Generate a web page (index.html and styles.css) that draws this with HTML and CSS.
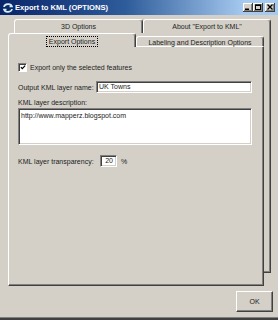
FILE: index.html
```html
<!DOCTYPE html>
<html lang="en">
<head>
  <meta charset="UTF-8">
  <title>Export to KML (OPTIONS)</title>
  <link rel="stylesheet" href="styles.css">
</head>
<body>
  <div class="window">
    <div class="titlebar">
      <svg class="app-icon" width="12" height="12" viewBox="0 0 12 12">
        <path d="M2 5 C2.5 1.5 9 1 10 4.5 L7.5 4.5 M10 7 C9.5 10.5 3 11 2 7.5 L4.5 7.5" stroke="#d6eeee" stroke-width="1.6" fill="none"/>
      </svg>
      <span class="title">Export to KML (OPTIONS)</span>
      <div class="caption-btns">
        <span class="cbtn"><svg width="10" height="9" viewBox="0 0 10 9"><rect x="2" y="5.5" width="4" height="1.5" fill="#000"/></svg></span>
        <span class="cbtn"><svg width="10" height="9" viewBox="0 0 10 9"><rect x="2.5" y="2" width="5" height="4.5" fill="none" stroke="#000" stroke-width="1"/><rect x="2" y="1.5" width="6" height="1.5" fill="#000"/></svg></span>
        <span class="cbtn close"><svg width="10" height="9" viewBox="0 0 10 9"><path d="M2.5 1.5 L7.5 6.5 M7.5 1.5 L2.5 6.5" stroke="#000" stroke-width="1.3"/></svg></span>
      </div>
    </div>

    <div class="tabstrip">
      <div class="tab-row back-row">
        <div class="tab t-3d">3D Options</div>
        <div class="tab t-about">About "Export to KML"</div>
      </div>
      <div class="stack">
        <div class="front">
          <div class="tab-row front-row">
            <div class="tab selected"><span class="focus">Export Options</span></div>
            <div class="tab t-label">Labeling and Description Options</div>
          </div>
          <div class="panel">
            <div class="check-row">
              <span class="checkbox">
                <svg width="7" height="7" viewBox="0 0 7 7"><path d="M1 3 L2.7 4.8 L6 1.3" stroke="#000" stroke-width="1.4" fill="none"/></svg>
              </span>
              <span>Export only the selected features</span>
            </div>
            <div class="field-row">
              <span class="name-label">Output KML layer name:</span>
              <div class="textbox name-box">UK Towns</div>
            </div>
            <div class="desc-label">KML layer description:</div>
            <div class="textbox desc-box">http://www.mapperz.blogspot.com</div>
            <div class="field-row trans-row">
              <span class="trans-label">KML layer transparency:</span>
              <div class="textbox pct-box">20</div>
              <span class="pct">%</span>
            </div>
          </div>
        </div>
        <div class="back-sheet"></div>
      </div>
    </div>

    <div class="footer">
      <button class="ok">OK</button>
    </div>
  </div>
</body>
</html>
```

FILE: styles.css
```css
/* Global */
* { box-sizing: border-box; }
body {
  margin: 0;
  background: #d4d0c8;
  font-family: "Liberation Sans", Arial, sans-serif;
  font-size: 7px;
  color: #222;
}

.window {
  width: 278px;
  height: 320px;
  box-shadow: inset 0 -2px #404040, inset 0 -3px #808080;
}

/* Title bar */
.titlebar {
  height: 15px;
  display: flex;
  align-items: center;
  padding: 0 3px 0 2px;
  background: linear-gradient(to right, #0a246a 0%, #2e5c9a 45%, #a6caf0 88%);
}
.app-icon { flex: 0 0 auto; }
.title {
  margin-left: 1px;
  color: #fff;
  font-weight: bold;
  font-size: 7.6px;
}
.caption-btns { margin-left: auto; display: flex; }
.cbtn {
  width: 10px;
  height: 9px;
  background: #d4d0c8;
  box-shadow: inset -1px -1px #404040, inset 1px 1px #fff, inset -2px -2px #808080;
}
.cbtn svg { display: block; }
.cbtn.close { margin-left: 2px; }

/* Tabs */
.tabstrip { padding-left: 8px; margin-top: 4px; }
.tab-row { display: flex; }
.tab {
  display: flex;
  align-items: center;
  justify-content: center;
  background: #d4d0c8;
  border: 1px solid;
  border-bottom: none;
  border-color: #fff #404040 transparent #fff;
  border-radius: 3px 3px 0 0;
  box-shadow: inset -1px 0 #808080;
  white-space: nowrap;
}
.back-row { margin-left: 6px; height: 14px; }
.t-3d { width: 129px; }
.t-about { width: 128px; }

.stack { display: flex; }
.front { width: 256px; }
.back-sheet {
  align-self: flex-start;
  width: 7px;
  height: 240px;
  border-right: 1px solid #404040;
  border-bottom: 1px solid #404040;
  box-shadow: inset -1px -1px #808080;
}

.front-row { height: 13px; align-items: flex-end; }
.tab.selected {
  position: relative;
  z-index: 1;
  width: 128px;
  height: 14px;
  margin-bottom: -1px;
  padding-top: 1px;
}
.focus { border: 1px dotted #000; padding: 1px 2px 0; line-height: 8px; }
.t-label { width: 128px; height: 10px; padding-top: 1px; }

/* Panel */
.panel {
  height: 240px;
  border: 1px solid;
  border-color: #fff #404040 #404040 #fff;
  box-shadow: inset -1px -1px #808080;
  padding: 15px 0 0 9px;
}
.check-row { display: flex; align-items: center; height: 10px; gap: 3px; }
.checkbox {
  width: 9px;
  height: 9px;
  background: #fff;
  border: 1px solid;
  border-color: #808080 #fff #fff #808080;
  box-shadow: inset 1px 1px #404040;
  display: flex;
  align-items: center;
  justify-content: center;
}
.checkbox svg { display: block; margin: 1px 0 0 1px; }

.field-row { display: flex; align-items: center; height: 12px; margin-top: 9px; }
.name-label { width: 78px; }
.textbox {
  background: #fff;
  border: 1px solid;
  border-color: #808080 #fff #fff #808080;
  box-shadow: inset 1px 1px #404040, inset -1px -1px #d4d0c8;
  padding: 0 2px;
}
.name-box { width: 156px; height: 12px; line-height: 10px; }
.desc-label { margin-top: 5px; line-height: 9px; }
.desc-box { width: 234px; height: 37px; margin-top: 1px; padding-top: 2px; line-height: 9px; }
.trans-row { margin-top: 10px; }
.trans-label { width: 82px; }
.pct-box { width: 17px; height: 12px; line-height: 10px; text-align: right; padding-right: 3px; }
.pct { margin-left: 4px; }

/* Footer */
.footer { display: flex; justify-content: flex-end; padding: 5px 5px 0 0; }
.ok {
  width: 37px;
  height: 21px;
  padding: 0;
  font-family: inherit;
  font-size: 7px;
  color: #222;
  background: #d4d0c8;
  border: 1px solid;
  border-color: #fff #404040 #404040 #fff;
  box-shadow: inset -1px -1px #808080;
}
```
